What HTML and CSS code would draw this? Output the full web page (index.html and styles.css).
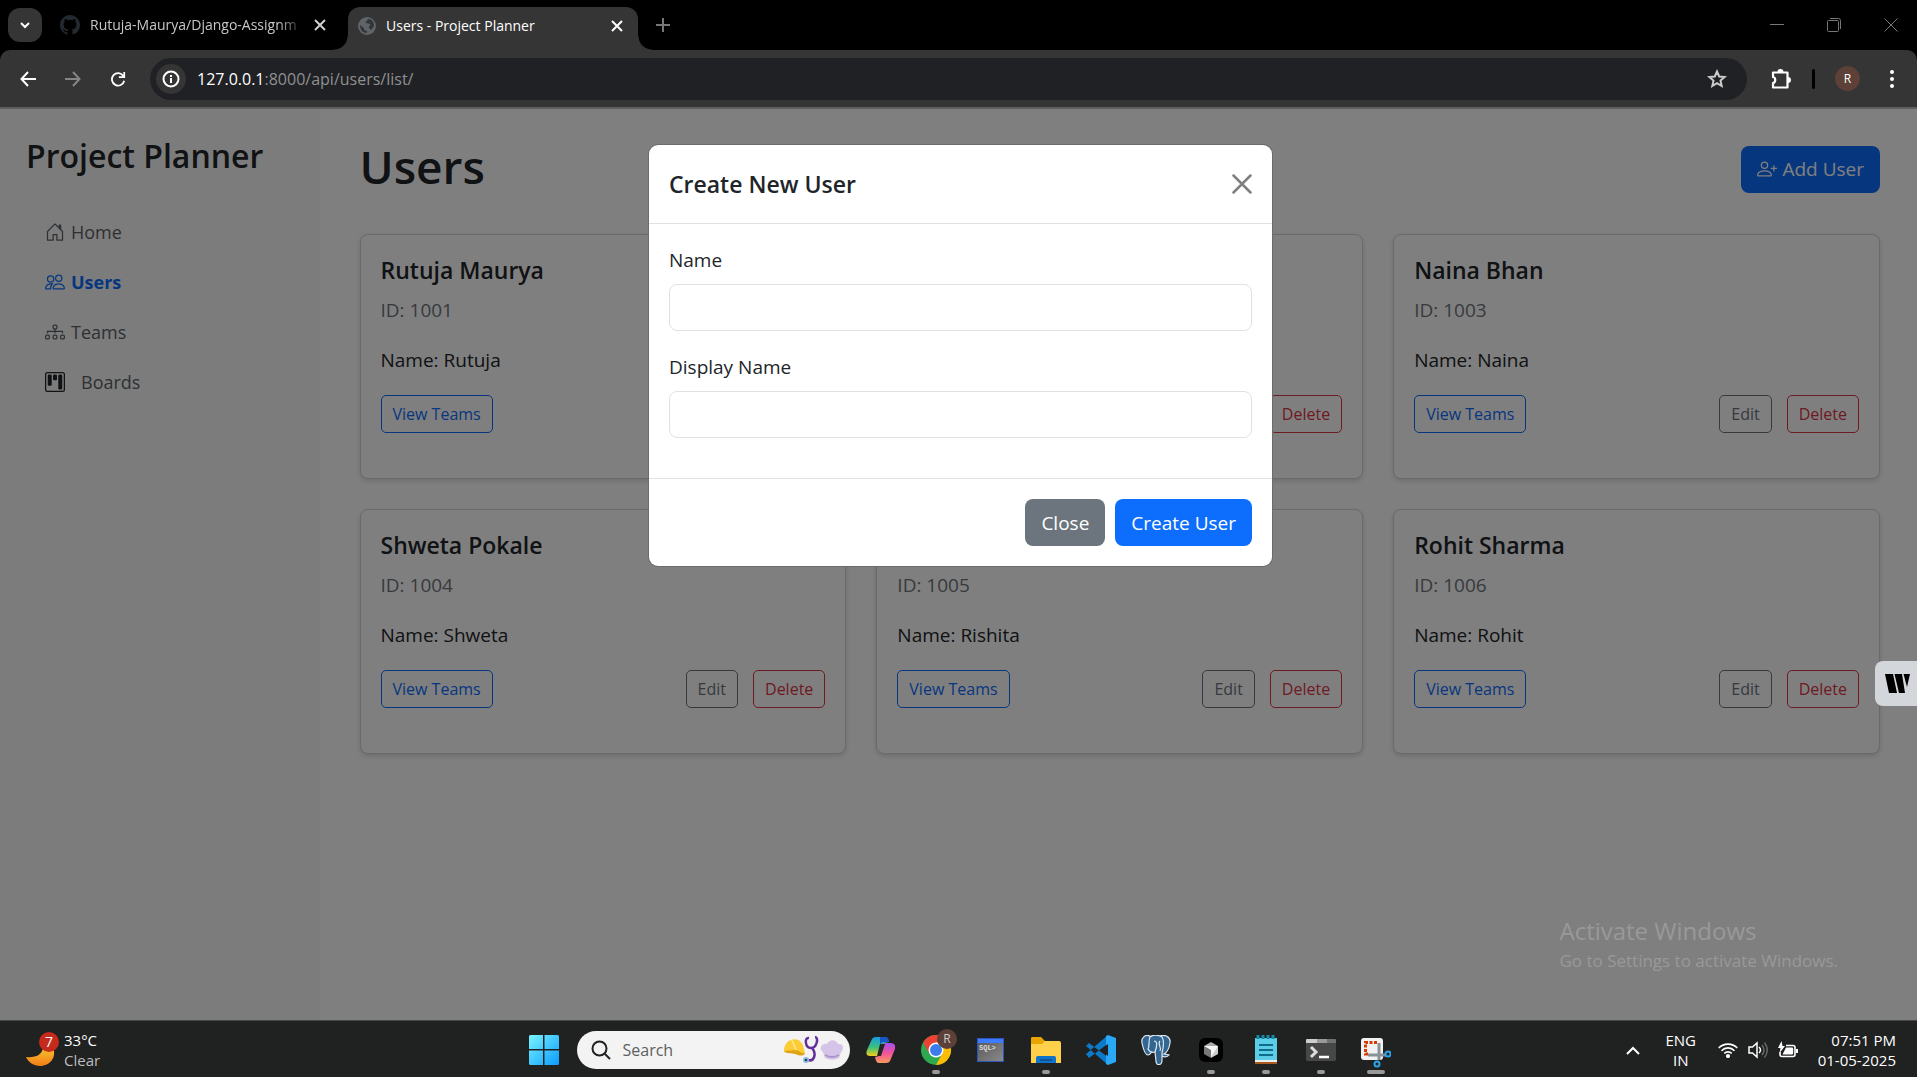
FILE: index.html
```html
<!DOCTYPE html>
<html lang="en">
<head>
<meta charset="utf-8">
<title>Users - Project Planner</title>
<link rel="stylesheet" href="styles.css">
</head>
<body>
<header class="browser">
  <div class="tabs">
    <button class="tab-search" aria-label="Search tabs"><svg width="12" height="12" viewBox="0 0 12 12" fill="none" stroke="#fff" stroke-width="2"><path d="M2 4l4 4 4-4"/></svg></button>
    <div class="tab">
      <svg width="20" height="20" viewBox="0 0 16 16" fill="#24292f"><path d="M8 0C3.58 0 0 3.58 0 8c0 3.54 2.29 6.53 5.47 7.59.4.07.55-.17.55-.38 0-.19-.01-.82-.01-1.49-2.01.37-2.53-.49-2.69-.94-.09-.23-.48-.94-.82-1.13-.28-.15-.68-.52-.01-.53.63-.01 1.08.58 1.23.82.72 1.21 1.87.87 2.33.66.07-.52.28-.87.51-1.07-1.78-.2-3.64-.89-3.64-3.95 0-.87.31-1.59.82-2.15-.08-.2-.36-1.02.08-2.12 0 0 .67-.21 2.2.82a7.6 7.6 0 0 1 4 0c1.53-1.04 2.2-.82 2.2-.82.44 1.1.16 1.92.08 2.12.51.56.82 1.27.82 2.15 0 3.07-1.87 3.75-3.65 3.95.29.25.54.73.54 1.48 0 1.07-.01 1.93-.01 2.2 0 .21.15.46.55.38A8 8 0 0 0 16 8c0-4.42-3.58-8-8-8z"/></svg>
      <span class="tab-title faded">Rutuja-Maurya/Django-Assignm</span>
      <button class="plain" aria-label="Close tab"><svg width="12" height="12" viewBox="0 0 12 12" stroke="#d0d0d0" stroke-width="2"><path d="M1 1l10 10M11 1L1 11"/></svg></button>
    </div>
    <div class="tab active">
      <svg width="18" height="18" viewBox="0 0 18 18"><circle cx="9" cy="9" r="9" fill="#606367"/><path d="M2 8l4 3v2l3 1v2c-4 0-7-3-7-8zM10 2c0 2-3 2-2 4l4 1c1 2-2 2-1 4l2 2 3-4c0-4-2-7-6-7z" fill="#333639"/></svg>
      <span class="tab-title">Users - Project Planner</span>
      <button class="plain" aria-label="Close tab"><svg width="12" height="12" viewBox="0 0 12 12" stroke="#fff" stroke-width="2"><path d="M1 1l10 10M11 1L1 11"/></svg></button>
    </div>
    <button class="plain new-tab" aria-label="New tab"><svg width="14" height="14" viewBox="0 0 14 14" stroke="#777" stroke-width="2"><path d="M7 0v14M0 7h14"/></svg></button>
    <div class="window-buttons">
      <button class="plain" aria-label="Minimize"><svg width="14" height="14" viewBox="0 0 14 14" stroke="#777"><path d="M0 6.500h14"/></svg></button>
      <button class="plain" aria-label="Restore"><svg width="14" height="14" viewBox="0 0 14 14" fill="none" stroke="#777"><rect x=".5" y="2.500" width="11" height="11" rx="1"/><path d="M3 .5h8.500a2 2 0 0 1 2 2V11"/></svg></button>
      <button class="plain" aria-label="Close window"><svg width="14" height="14" viewBox="0 0 14 14" stroke="#777"><path d="M.5.500l13 13M13.500.500l-13 13"/></svg></button>
    </div>
  </div>
  <div class="toolbar">
    <div class="nav-btns">
      <button class="plain" aria-label="Back"><svg width="16" height="16" viewBox="0 0 16 16" fill="none" stroke="#fff" stroke-width="2"><path d="M16 8H2M8 1L1.500 8 8 15"/></svg></button>
      <button class="plain" aria-label="Forward"><svg width="16" height="16" viewBox="0 0 16 16" fill="none" stroke="#858585" stroke-width="2"><path d="M0 8h14M8 1l6.500 7L8 15"/></svg></button>
      <button class="plain" aria-label="Reload"><svg width="16" height="16" viewBox="0 0 18 18" fill="none" stroke="#fff" stroke-width="2"><path d="M15 5.500A7 7 0 1 0 16 11M16 1v6h-6"/></svg></button>
    </div>
    <div class="omnibox">
      <button class="site-info" aria-label="Site information"><svg width="18" height="18" viewBox="0 0 18 18" fill="none" stroke="#fff" stroke-width="2"><circle cx="9" cy="9" r="7.500"/><path d="M9 8v5M9 5v2"/></svg></button>
      <a class="url" href="#"><b>127.0.0.1</b>:8000/api/users/list/</a>
      <button class="plain star" aria-label="Bookmark"><svg width="20" height="20" viewBox="0 0 20 20" fill="none" stroke="#ccc" stroke-width="2"><path d="M10 2.500l2.200 5 5.400.5-4.100 3.600 1.200 5.400L10 14.200 5.300 17l1.200-5.400L2.400 8l5.400-.5z"/></svg></button>
    </div>
    <button class="plain ext" aria-label="Extensions"><svg width="22" height="22" viewBox="0 0 22 22"><path d="M3 4.500h14.500v15H3v-4.500c3-.5 3-5.500 0-6z" fill="none" stroke="#fff" stroke-width="2.200" stroke-linejoin="round"/><path d="M7.500 4a3 3 0 0 1 6 0zM18 9a3 3 0 0 1 0 6z" fill="#fff"/></svg></button>
    <span class="divider"></span>
    <button class="avatar" aria-label="Profile">R</button>
    <button class="plain" aria-label="Menu"><svg width="6" height="20" viewBox="0 0 6 20" fill="#fff"><circle cx="3" cy="3" r="2"/><circle cx="3" cy="10" r="2"/><circle cx="3" cy="17" r="2"/></svg></button>
  </div>
</header>

<div class="viewport">
  <aside class="sidebar">
    <h2>Project Planner</h2>
    <nav>
      <a href="#"><svg width="20" height="20" viewBox="0 0 16 16" fill="currentColor"><path d="M8.354 1.146a.5.5 0 0 0-.708 0l-6 6A.5.5 0 0 0 1.500 7.500v7a.5.5 0 0 0 .5.5h4.500a.5.5 0 0 0 .5-.5v-4h2v4a.5.5 0 0 0 .5.5H14a.5.5 0 0 0 .5-.5v-7a.5.5 0 0 0-.146-.354L13 5.793V2.500a.5.5 0 0 0-.5-.5h-1a.5.5 0 0 0-.5.5v1.293zM2.500 14V7.707l5.500-5.500 5.500 5.500V14H10v-4a.5.5 0 0 0-.5-.5h-3a.5.5 0 0 0-.5.5v4z"/></svg>Home</a>
      <a href="#" class="current"><svg width="20" height="20" viewBox="0 0 16 16" fill="currentColor"><path d="M15 14s1 0 1-1-1-4-5-4-5 3-5 4 1 1 1 1zm-7.978-1L7 12.996c.001-.264.167-1.030.76-1.720C8.312 10.629 9.282 10 11 10c1.717 0 2.687.63 3.240 1.276.593.69.758 1.457.76 1.720l-.008.002-.014.002zM11 7a2 2 0 1 0 0-4 2 2 0 0 0 0 4m3-2a3 3 0 1 1-6 0 3 3 0 0 1 6 0M6.936 9.280a6 6 0 0 0-1.230-.247A7 7 0 0 0 5 9c-4 0-5 3-5 4q0 1 1 1h4.216A2.240 2.240 0 0 1 5 13c0-1.010.377-2.042 1.090-2.904.243-.294.526-.569.846-.816M4.920 10A5.500 5.500 0 0 0 4 13H1c0-.26.164-1.030.76-1.724.545-.636 1.492-1.256 3.160-1.275ZM1.500 5.500a3 3 0 1 1 6 0 3 3 0 0 1-6 0m3-2a2 2 0 1 0 0 4 2 2 0 0 0 0-4"/></svg>Users</a>
      <a href="#"><svg width="20" height="20" viewBox="0 0 16 16" fill="none" stroke="currentColor"><rect x="6.500" y="2.500" width="3" height="3" rx="1"/><rect x=".5" y="10.500" width="3" height="3" rx="1"/><rect x="6.500" y="10.500" width="3" height="3" rx="1"/><rect x="12.500" y="10.500" width="3" height="3" rx="1"/><path d="M8 5.500V9M2 9V7.500h12V9"/></svg>Teams</a>
      <a href="#" class="boards"><svg width="20" height="20" viewBox="0 0 16 16" fill="#212529"><rect x=".5" y=".5" width="15" height="15" rx="1.500" fill="none" stroke="#212529"/><rect x="2.200" y="2" width="3.200" height="9" rx="1"/><rect x="6.400" y="2" width="3.200" height="4.500" rx="1"/><rect x="10.600" y="2" width="3.200" height="12" rx="1"/></svg>Boards</a>
    </nav>
  </aside>
  <main>
    <div class="page-head">
      <h1>Users</h1>
      <button class="btn primary"><svg width="20" height="20" viewBox="0 0 16 16" fill="none" stroke="currentColor"><circle cx="6" cy="5" r="2.500"/><path d="M1 13.500c-.7 0-.5-1-.3-1.500C1.300 10.500 3 9.500 6 9.500s4.700 1 5.300 2.500c.2.5.4 1.500-.3 1.500zM13.500 5v5M11 7.500h5"/></svg>Add User</button>
    </div>
    <div class="cards">
      <article class="card"><h5>Rutuja Maurya</h5><p class="id">ID: 1001</p><p>Name: Rutuja</p><div class="actions"><button class="btn-sm blue">View Teams</button><button class="btn-sm gray">Edit</button><button class="btn-sm red">Delete</button></div></article>
      <article class="card"><h5>User</h5><p class="id">ID: 1002</p><p>Name: User</p><div class="actions"><button class="btn-sm blue">View Teams</button><button class="btn-sm gray">Edit</button><button class="btn-sm red">Delete</button></div></article>
      <article class="card"><h5>Naina Bhan</h5><p class="id">ID: 1003</p><p>Name: Naina</p><div class="actions"><button class="btn-sm blue">View Teams</button><button class="btn-sm gray">Edit</button><button class="btn-sm red">Delete</button></div></article>
      <article class="card"><h5>Shweta Pokale</h5><p class="id">ID: 1004</p><p>Name: Shweta</p><div class="actions"><button class="btn-sm blue">View Teams</button><button class="btn-sm gray">Edit</button><button class="btn-sm red">Delete</button></div></article>
      <article class="card"><h5>Rishita</h5><p class="id">ID: 1005</p><p>Name: Rishita</p><div class="actions"><button class="btn-sm blue">View Teams</button><button class="btn-sm gray">Edit</button><button class="btn-sm red">Delete</button></div></article>
      <article class="card"><h5>Rohit Sharma</h5><p class="id">ID: 1006</p><p>Name: Rohit</p><div class="actions"><button class="btn-sm blue">View Teams</button><button class="btn-sm gray">Edit</button><button class="btn-sm red">Delete</button></div></article>
    </div>
  </main>

  <div class="backdrop">
    <form class="modal" role="dialog" aria-labelledby="modal-title">
      <div class="modal-head">
        <h5 id="modal-title">Create New User</h5>
        <button type="button" class="plain" aria-label="Close"><svg width="20" height="20" viewBox="0 0 20 20" stroke="#808080" stroke-width="2.500" stroke-linecap="round"><path d="M1.500 1.500l17 17M18.500 1.500l-17 17"/></svg></button>
      </div>
      <div class="modal-body">
        <label for="name">Name</label>
        <input id="name" type="text">
        <label for="display">Display Name</label>
        <input id="display" type="text">
      </div>
      <div class="modal-foot">
        <button type="button" class="btn secondary">Close</button>
        <button type="button" class="btn primary">Create User</button>
      </div>
    </form>
  </div>
  <div class="watermark"><div class="wm-title">Activate Windows</div><div>Go to Settings to activate Windows.</div></div>
  <button class="side-widget" aria-label="Open assistant"><svg width="25" height="19" viewBox="0 0 25 19" fill="#000"><path d="M0 0h8l4 19H4zM9.500 0h7.500l3 19h-6zM18.500 0H25l-3 13z"/></svg></button>
</div>

<footer class="taskbar">
  <button class="weather">
    <svg width="34" height="38" viewBox="0 0 34 38"><defs><linearGradient id="moon" x1="0" y1="0" x2="0" y2="1"><stop offset="0" stop-color="#f8c22c"/><stop offset="1" stop-color="#f27c18"/></linearGradient></defs><path d="M1 26c9 1 16-2 17-9h10c4 9-3 18-13 18-6 0-12-4-14-9z" fill="url(#moon)"/><circle cx="24" cy="11" r="10" fill="#c42b1c"/><text x="24" y="16" text-anchor="middle" class="badge-text">7</text></svg>
    <span class="stack"><span>33°C</span><span class="dim">Clear</span></span>
  </button>
  <div class="apps">
    <button class="app" aria-label="Start"><svg width="30" height="30" viewBox="0 0 30 30"><defs><linearGradient id="win" x1="0" y1="0" x2="1" y2="1"><stop offset="0" stop-color="#7af4ff"/><stop offset="1" stop-color="#0a9bff"/></linearGradient></defs><path d="M0 1.500Q0 0 1.500 0H14v14H0zM15.500 0h13Q30 0 30 1.500V14H15.500zM0 15.500h14V30H1.500Q0 30 0 28.500zM15.500 15.500H30v13q0 1.500-1.500 1.500h-13z" fill="url(#win)"/></svg></button>
    <div class="search">
      <svg width="20" height="20" viewBox="0 0 20 20" fill="none" stroke="#222" stroke-width="2"><circle cx="8.500" cy="8.500" r="7"/><path d="M13.500 13.500L19 19"/></svg>
      <input type="text" placeholder="Search" aria-label="Search">
      <svg width="62" height="30" viewBox="0 0 62 30"><path d="M1 16C1 4 15 0 20 10l2 8c-2 4-6 1-10 0S3 19 1 16z" fill="#fccb35"/><path d="M1 16l12-1 9 4c-3 3-7 1-10 0S3 19 1 16z" fill="#dda514"/><path d="M9 5l4 10" stroke="#ffe47a" stroke-width="2"/><path d="M26 3c-5-1-4 10 2 10s8-11 4-11M29 13c5 6 2 14-4 12" fill="none" stroke="#62309a" stroke-width="2.500"/><circle cx="23" cy="25" r="3" fill="#8dbbe5"/><circle cx="23" cy="25" r="1.300" fill="#245"/><path d="M42 23l-2-6c-5-3-1-10 4-8 3-6 10-4 11 0 6-1 6 6 3 8l-2 6c-4 2-10 2-14 0z" fill="#d5c4e8"/><path d="M42 20q7 4 14 0" fill="none" stroke="#a994c7" stroke-width="2"/></svg>
    </div>
    <button class="app" aria-label="Copilot"><svg width="30" height="30" viewBox="0 0 30 30"><defs><linearGradient id="cp1" x1="0" y1="0" x2="0" y2="1"><stop offset="0" stop-color="#179be5"/><stop offset=".55" stop-color="#3cc27a"/><stop offset="1" stop-color="#f6cf1b"/></linearGradient><linearGradient id="cp2" x1="0" y1="0" x2="0" y2="1"><stop offset="0" stop-color="#a850ef"/><stop offset=".5" stop-color="#f0539a"/><stop offset="1" stop-color="#fb9b5a"/></linearGradient></defs><path d="M6 4q1-2 4-2h9q3 0 4 5l-5 1-5 13H4q-5 0-3-6z" fill="url(#cp1)"/><path d="M14 2h6q2 0 3 5h-5q-3 0-4 3z" fill="#1856c6"/><path d="M24 26q-1 2-4 2h-7q-3 0-4-6l4-1 5-13h7q5 0 4 6z" fill="url(#cp2)"/><path d="M14 9h5l-4 12h-4z" fill="#252525"/></svg></button>
    <button class="app on" aria-label="Chrome"><svg width="42" height="42" viewBox="-4 0 42 42"><circle cx="17" cy="21" r="15" fill="#2da94f"/><path d="M4 13.500A15 15 0 0 1 30 13.500L17 15z" fill="#ea4335"/><path d="M17 13.500h13A15 15 0 0 1 17 36l6.500-12z" fill="#fbbc04"/><path d="M4 13.500l6.500 11.500 7-11z" fill="#ea4335"/><circle cx="17" cy="21" r="7.500" fill="#fff"/><circle cx="17" cy="21" r="6" fill="#3b7ded"/><circle cx="28" cy="10" r="10" fill="#5d4037"/><text x="28" y="14" text-anchor="middle" class="chrome-text">R</text></svg></button>
    <button class="app" aria-label="SQL Plus"><svg width="28" height="24" viewBox="0 0 28 24"><defs><linearGradient id="sql" x1="0" y1="0" x2="1" y2="1"><stop offset="0" stop-color="#555"/><stop offset="1" stop-color="#8b8b8b"/></linearGradient></defs><rect x=".5" y=".5" width="26" height="23" fill="url(#sql)" stroke="#2f57bb"/><path d="M1 1h25v4H1z" fill="#3c7aff"/><text x="2" y="12" class="sql-text">SQL&gt;</text></svg></button>
    <button class="app on" aria-label="File Explorer"><svg width="30" height="28" viewBox="0 0 30 28"><path d="M0 2q0-1 2-1h8l4 4h14v5H0z" fill="#e8a400"/><path d="M0 8h11l3-3h14q2 0 2 2v20H0z" fill="#ffd04a"/><path d="M5 27v-5q0-2 2-2h16q2 0 2 2v5z" fill="#1173c8"/><path d="M9 24h12" stroke="#0b4a8c" stroke-width="1.500"/></svg></button>
    <button class="app" aria-label="VS Code"><svg width="30" height="30" viewBox="0 0 30 30"><path d="M0 11l3-3 20 15-1 7zM0 19l3 4L23 8l-1-8z" fill="#0b7ac9"/><path d="M22 0l8 3v24l-8 3-2-1V1z" fill="#29a8f5"/><path d="M22 9v12l-8-6z" fill="#202020"/></svg></button>
    <button class="app" aria-label="PostgreSQL"><svg width="30" height="30" viewBox="0 0 30 30" fill="#336791" stroke="#dfe8ef" stroke-width="1.200"><path d="M9 1C4-1 0 3 1 8s3 12 6 12 3-4 5-4zM19 1c5-2 11 1 10 7s-4 10-6 11l5 1c-2 3-7 2-8 0z"/><path d="M9 2c3-3 9-2 12 0 3 5 1 12 0 16v7c0 6-6 6-6 1l-1-9c-4 1-6-1-7-3 2-3 0-8 2-12z"/><path d="M13 6c4 0 3 5 1 11M19 6c-3 3 2 6 0 10" fill="none"/></svg></button>
    <button class="app on" aria-label="Cursor"><svg width="24" height="24" viewBox="0 0 24 24"><rect width="24" height="24" rx="6" fill="#000"/><path d="M12 4l7 4-7 4-7-4z" fill="#aaa"/><path d="M5 8l7 4v8l-7-4z" fill="#777"/><path d="M12 12l7-4v8l-7 4z" fill="#ccc"/><path d="M5 8h14l-7 11v-7z" fill="#f5f5f5"/></svg></button>
    <button class="app on" aria-label="Notepad"><svg width="24" height="30" viewBox="0 0 24 30"><path d="M1 3h22v24H1z" fill="#5bcde8"/><path d="M1 26h22v3H1z" fill="#a85a20"/><path d="M1 25h22v2H1z" fill="#eee"/><path d="M5 10h14M5 15h14M5 20h14" stroke="#116b8a" stroke-width="2"/><path d="M4 0v4M9 0v4M14 0v4M19 0v4" stroke="#1688a8" stroke-width="3"/></svg></button>
    <button class="app on" aria-label="Terminal"><svg width="30" height="22" viewBox="0 0 30 22"><rect width="30" height="22" rx="1.500" fill="#474747"/><path d="M0 1q0-1 1-1h10v4H0z" fill="#ccc"/><path d="M11 0h10v4H11z" fill="#999"/><path d="M21 0h8q1 0 1 1v3h-9z" fill="#707070"/><path d="M5 8l5 5-5 5" fill="none" stroke="#ddd" stroke-width="3"/><path d="M13 18h10" stroke="#fff" stroke-width="2.500"/></svg></button>
    <button class="app on wide" aria-label="Snipping Tool"><svg width="30" height="36" viewBox="0 -5 30 36"><rect y="1" width="22" height="22" rx="3" fill="#f2f2f2"/><path d="M16 5.500H4.500V17H8" fill="none" stroke="#d83b01" stroke-width="3" stroke-dasharray="3 1.500"/><path d="M18 6v17M7 18h18" stroke="#8a9299" stroke-width="3"/><circle cx="27" cy="17" r="2.500" fill="none" stroke="#2aa4e6" stroke-width="2"/><circle cx="16" cy="27" r="2.500" fill="none" stroke="#2aa4e6" stroke-width="2"/></svg></button>
  </div>
  <div class="tray">
    <button class="plain" aria-label="Hidden icons"><svg width="14" height="9" viewBox="0 0 14 9" fill="none" stroke="#fff" stroke-width="2"><path d="M1 8l6-6 6 6"/></svg></button>
    <button class="stack lang"><span>ENG</span><span>IN</span></button>
    <button class="status" aria-label="Network, volume, battery">
      <svg width="20" height="16" viewBox="0 0 20 16" fill="none" stroke="#fff" stroke-width="1.600"><path d="M.7 6a13 13 0 0 1 18.600 0M3.500 8.700a9 9 0 0 1 13 0M6.300 11.400a5.200 5.200 0 0 1 7.400 0"/><circle cx="10" cy="14" r="1.300" fill="#fff"/></svg>
      <svg width="20" height="18" viewBox="0 0 20 18" fill="none" stroke="#fff" stroke-width="1.500"><path d="M1 6h3.500L9 2v14l-4.500-4H1z"/><path d="M11 6q3 3 0 6"/><path d="M14 4q4 5 0 10M16.500 1.500q5.500 7.500 0 15" stroke="#666"/></svg>
      <svg width="20" height="18" viewBox="0 0 20 18"><path d="M8 4.500h7q2 0 2 2v7q0 2-2 2H4q-2 0-2-2V11" fill="none" stroke="#fff" stroke-width="1.600"/><path d="M8 6.500h6q1.200 0 1.200 1v5q0 1-1.200 1H4.500zM18 8h2v4h-2zM3.500 0L0 7h2.500L1.500 12 7 5H4.500z" fill="#fff"/></svg>
    </button>
    <button class="stack clock"><span>07:51 PM</span><span>01-05-2025</span></button>
  </div>
</footer>
</body>
</html>
```
FILE: styles.css
```css
* { box-sizing: border-box; }
body {
  margin: 0;
  min-height: 100vh;
  display: flex;
  flex-direction: column;
  font: 19px/30px "Open Sans", "Noto Sans", sans-serif;
  color: #212529;
  background: #fff;
}
button, input { font: inherit; }
svg { flex: none; display: block; }
h1, h2, h5, p { margin: 0; }
.plain { border: 0; padding: 0; background: none; display: flex; align-items: center; justify-content: center; }

/* Browser frame */
.browser { background: #000; border-bottom: 2px solid #5f5f5f; }
.tabs { height: 50px; display: flex; align-items: center; padding-left: 8px; font-size: 14px; line-height: 20px; }
.tab-search { width: 34px; height: 34px; border: 0; border-radius: 12px; background: #353535; padding: 0; display: grid; place-items: center; }
.tab { width: 306px; display: flex; align-items: center; gap: 10px; padding: 0 22px 0 18px; color: #c7c7c7; }
.tab-title { flex: 1; white-space: nowrap; }
.faded { -webkit-mask-image: linear-gradient(90deg, #000 88%, transparent); mask-image: linear-gradient(90deg, #000 88%, transparent); }
.tab.active { position: relative; width: 290px; height: 43px; align-self: flex-end; padding: 0 15px 6px 10px; background: #353535; color: #fff; border-radius: 12px 12px 0 0; }
.tab.active::before, .tab.active::after { content: ""; position: absolute; bottom: 0; width: 14px; height: 14px; }
.tab.active::before { left: -14px; background: radial-gradient(circle at 0 0, #000 13px, #353535 14px); }
.tab.active::after { right: -14px; background: radial-gradient(circle at 100% 0, #000 13px, #353535 14px); }
.new-tab { margin-left: 18px; }
.window-buttons { margin-left: auto; display: flex; gap: 43px; padding-right: 19px; }
.toolbar { height: 57px; background: #353535; border-radius: 10px 10px 0 0; display: flex; align-items: center; padding: 0 22px 0 20px; }
.nav-btns { display: flex; gap: 29px; margin-right: 24px; }
.omnibox { flex: 1; height: 42px; margin-right: 23px; padding: 0 20px 0 6px; border-radius: 21px; background: #202124; display: flex; align-items: center; }
.site-info { width: 30px; height: 30px; padding: 0; border: 0; border-radius: 50%; background: #353535; display: grid; place-items: center; }
.url { flex: 1; margin-left: 11px; font-size: 16px; color: #8e9092; text-decoration: none; }
.url b { font-weight: 400; color: #fff; }
.divider { width: 3px; height: 20px; margin: 0 20px; background: #000; border-radius: 2px; }
.avatar { width: 25px; height: 25px; margin-right: 29px; padding: 0; border: 0; border-radius: 50%; background: #5d4037; color: #fff; font-size: 12px; line-height: 25px; }

/* Application */
.viewport { position: relative; flex: 1; display: flex; overflow: hidden; }
.sidebar { flex: 0 0 16.667%; padding: 26px; background: #f8f9fa; }
.sidebar h2 { font-size: 32px; line-height: 42px; font-weight: 600; margin-bottom: 30px; white-space: nowrap; }
.sidebar nav { display: flex; flex-direction: column; font-size: 18px; }
.sidebar a { display: flex; align-items: center; gap: 6px; padding: 10px 19px; color: #5c6166; text-decoration: none; }
.sidebar a.current { color: #0d6efd; font-weight: 700; }
.sidebar a.boards { gap: 16px; }
main { flex: 1; padding: 27px 37px 40px 40px; }
.page-head { display: flex; align-items: center; justify-content: space-between; height: 66px; margin-bottom: 32px; }
h1 { align-self: flex-start; font-size: 46px; line-height: 60px; font-weight: 600; }
.btn { height: 47px; padding: 0 16px; border: 0; border-radius: 8px; color: #fff; display: flex; align-items: center; gap: 5px; }
.primary { background: #0d6efd; }
.secondary { background: #6c757d; }
.cards { display: grid; grid-template-columns: repeat(3, 1fr); gap: 30px; }
.card { height: 245px; padding: 20px; border: 1px solid #d3d4d5; border-radius: 8px; background: #fff; box-shadow: 0 2px 5px rgba(0, 0, 0, .15); }
h5 { font-size: 23px; line-height: 30px; font-weight: 600; }
.card h5 { margin-bottom: 10px; }
.card p { margin-bottom: 20px; }
.card .id { color: #70757a; }
.card .actions { display: flex; gap: 15px; }
.btn-sm { height: 38px; padding: 0 11px; border: 1px solid; border-radius: 5px; background: none; font-size: 16px; line-height: 24px; }
.blue { color: #0d6efd; margin-right: auto; }
.gray { color: #6c757d; }
.red { color: #dc3545; }

/* Dialog */
.backdrop { position: absolute; inset: 0; background: rgba(0, 0, 0, .5); display: flex; justify-content: center; align-items: flex-start; padding: 36px 20px 36px 24px; }
.modal { width: 623px; max-width: 100%; border-radius: 9px; background: #fff; box-shadow: 0 0 0 1px #6b6b6b; }
.modal-head { display: flex; align-items: center; justify-content: space-between; height: 79px; padding: 0 20px; border-bottom: 1px solid #dee2e6; }
.modal-body { display: flex; flex-direction: column; padding: 21px 20px 40px; }
.modal-body label { margin-bottom: 9px; }
.modal-body input { height: 47px; padding: 0 15px; border: 1px solid #dee2e6; border-radius: 8px; }
.modal-body input + label { margin-top: 21px; }
.modal-foot { display: flex; justify-content: flex-end; gap: 10px; padding: 20px; border-top: 1px solid #dee2e6; }
.watermark { position: absolute; right: 79px; bottom: 44px; font-size: 17px; color: #999; }
.wm-title { font-size: 24px; }
.side-widget { position: absolute; right: 0; top: 552px; width: 42px; height: 45px; padding: 0 0 0 10px; border: 0; border-radius: 8px 0 0 8px; background: #d3d6db; }

/* Taskbar */
.taskbar { height: 57px; padding: 2px 0 0 3px; background: #202121; border-top: 1px solid #454747; color: #fff; font-size: 15px; line-height: 20px; display: grid; grid-template-columns: 1fr auto 1fr; align-items: center; }
.taskbar button { color: inherit; }
.weather { justify-self: start; display: flex; align-items: center; gap: 5px; border: 0; padding: 0 0 0 22px; background: none; text-align: left; }
.stack { display: flex; flex-direction: column; border: 0; padding: 0; background: none; }
.dim { color: #bdbdbd; }
.badge-text { font-size: 14px; fill: #fff; }
.chrome-text { font-size: 12px; fill: #ccc; }
.sql-text { font: bold 7px "Liberation Mono", monospace; fill: #ddd; }
.apps { display: flex; align-items: center; }
.app { position: relative; width: 55px; height: 54px; padding: 0; border: 0; background: none; display: grid; place-items: center; }
.app.on::after { content: ""; position: absolute; bottom: 3px; width: 8px; height: 4px; border-radius: 2px; background: #999; }
.app.wide::after { width: 18px; }
.search { width: 273px; height: 38px; margin: 0 4px 0 5px; padding: 0 5px 0 14px; border-radius: 19px; background: #f3f3f3; display: flex; align-items: center; gap: 12px; }
.search input { flex: 1; min-width: 0; padding: 0; border: 0; background: none; font-size: 16px; }
.search input::placeholder { color: #606060; opacity: 1; }
.tray { justify-self: end; display: flex; align-items: center; padding-right: 21px; }
.lang { width: 30px; align-items: center; margin: 0 22px 0 26px; }
.status { display: flex; align-items: center; gap: 10px; padding: 0; border: 0; background: none; margin-right: 20px; }
.clock { align-items: flex-end; }
```
